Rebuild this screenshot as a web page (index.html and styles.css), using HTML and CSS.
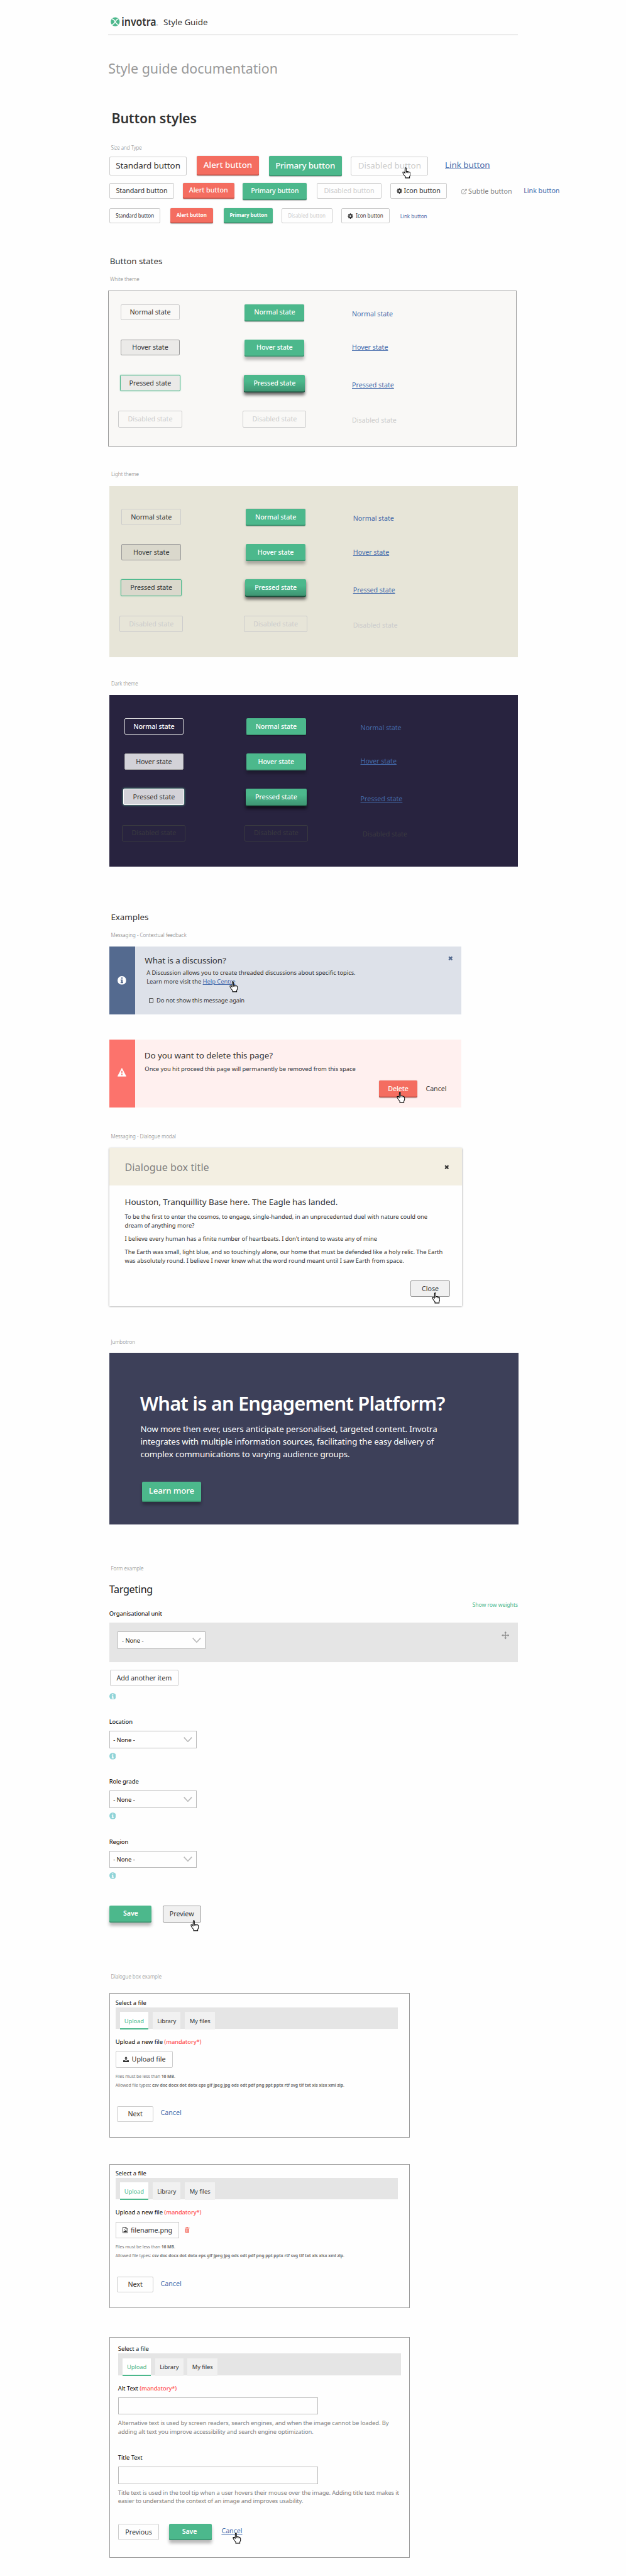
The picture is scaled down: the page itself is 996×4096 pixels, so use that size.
FILE: index.html
```html
<!DOCTYPE html>
<html lang="en">
<head>
<meta charset="utf-8">
<title>Invotra Style Guide</title>
<link rel="stylesheet" href="styles.css">
</head>
<body>
<svg class="sprite" aria-hidden="true">
  <symbol id="hand" viewBox="0 0 20 26"><path d="M6.5 1.5c1.2-.9 2.4-.2 2.6 1V9l2.5.3 2.6.8 2.6.9 1.6 2v5.2l-1.6 3.2v3H7.300v-2.700L4 17.800 1.500 13.300V10.900H4l2 2.300z" fill="#fff" stroke="#000" stroke-width="1.500"/><path d="M9.200 9v4M12 9.800v3.400M14.800 10.800v2.800" stroke="#000" stroke-width="1.100" fill="none"/></symbol>
  <symbol id="gear" viewBox="0 0 14 14"><path fill-rule="evenodd" fill="currentColor" d="M5.900.5h2.200l.4 1.700 1 .4 1.500-.9 1.500 1.500-.9 1.500.4 1 1.700.4v2.200l-1.700.4-.4 1 .9 1.500-1.500 1.500-1.500-.9-1 .4-.4 1.700H5.900l-.4-1.700-1-.4-1.500.9-1.500-1.500.9-1.500-.4-1L.3 8.300V6.100L2 5.700l.4-1-.9-1.500L3 1.700l1.500.9 1-.4zM7 4.900a2.200 2.200 0 1 0 0 4.400 2.200 2.200 0 0 0 0-4.400z"/></symbol>
  <symbol id="external" viewBox="0 0 14 14"><path d="M7 2.500H2.500a1.500 1.500 0 0 0-1.500 1.500v7A1.500 1.500 0 0 0 2.500 12.500h7A1.500 1.500 0 0 0 11 11V8.500" fill="none" stroke="currentColor" stroke-width="1.100"/><path d="M5.300 8.700 12 2" stroke="currentColor" stroke-width="1.500"/><path d="M8.800 1H13.400V5.600z" fill="currentColor"/></symbol>
  <symbol id="cross" viewBox="0 0 11 11"><path d="M1.800 1.800 9.200 9.200M9.200 1.800 1.800 9.200" stroke="currentColor" stroke-width="3.200"/></symbol>
  <symbol id="info" viewBox="0 0 20 20"><circle cx="10" cy="10" r="10" fill="currentColor"/><path class="cut" d="M8.400 3.400h3.300v2.800H8.400zM7 7.800h4.700v6h1.300v2.300H7v-2.300h1.400V10H7z"/></symbol>
  <symbol id="chev" viewBox="0 0 20 12"><path d="M1 1l9 9.500L19 1" fill="none" stroke="#bbb" stroke-width="2.400"/></symbol>
</svg>
<main class="page">
  <header class="top">
    <svg class="logo" viewBox="0 0 116 24">
      <circle cx="10.500" cy="12.500" r="10.300" fill="#4cb88c"/>
      <path d="M3 5.500c4 1.500 6 3.500 7.500 7s3.500 5.500 7.500 7M18 5.500c-4 1.500-6 3.500-7.500 7s-3.500 5.500-7.500 7" fill="none" stroke="#fefefe" stroke-width="2.100"/>
      <text x="25" y="22" class="wordmark" textLength="80" lengthAdjust="spacingAndGlyphs">invotra</text>
      <text x="105" y="21.500" class="reg">®</text>
    </svg>
    <span class="t20">Style Guide</span>
  </header>
  <h1 class="doc-title">Style guide documentation</h1>
  <h2 class="big-title">Button styles</h2>
  <p class="cap cap-size">Size and Type</p>

  <div class="row row-lg">
    <a class="btn std b1">Standard button</a>
    <a class="btn alert b2">Alert button</a>
    <a class="btn go b3">Primary button</a>
    <a class="btn std off b4">Disabled button<svg class="hand h-dis"><use href="#hand"/></svg></a>
    <a class="link under b5">Link button</a>
  </div>
  <div class="row row-md">
    <a class="btn std b1">Standard button</a>
    <a class="btn alert b2">Alert button</a>
    <a class="btn go b3">Primary button</a>
    <a class="btn std off b4">Disabled button</a>
    <a class="btn std b5"><svg class="ico"><use href="#gear"/></svg>Icon button</a>
    <a class="subtle"><svg class="ico"><use href="#external"/></svg>Subtle button</a>
    <a class="link b6">Link button</a>
  </div>
  <div class="row row-sm">
    <a class="btn std b1">Standard button</a>
    <a class="btn alert b2">Alert button</a>
    <a class="btn go b3">Primary button</a>
    <a class="btn std off b4">Disabled button</a>
    <a class="btn std b5"><svg class="ico"><use href="#gear"/></svg>Icon button</a>
    <a class="link b6">Link button</a>
  </div>

  <h3 class="sub states-title">Button states</h3>
  <p class="cap cap-white">White theme</p>
  <section class="panel white">
    <a class="btn std st">Normal state</a><a class="btn go st">Normal state</a><a class="link l1">Normal state</a>
    <a class="btn std st hov">Hover state</a><a class="btn go st hov">Hover state</a><a class="link l2 under">Hover state</a>
    <a class="btn std st press">Pressed state</a><a class="btn go st press">Pressed state</a><a class="link l3 under">Pressed state</a>
    <a class="btn std off dis">Disabled state</a><a class="btn std off dis">Disabled state</a><a class="link l1 faint">Disabled state</a>
  </section>
  <p class="cap cap-light">Light theme</p>
  <section class="panel light">
    <a class="btn std st">Normal state</a><a class="btn go st">Normal state</a><a class="link l1">Normal state</a>
    <a class="btn std st hov">Hover state</a><a class="btn go st hov">Hover state</a><a class="link l2 under">Hover state</a>
    <a class="btn std st press">Pressed state</a><a class="btn go st press">Pressed state</a><a class="link l3 under">Pressed state</a>
    <a class="btn std off dis">Disabled state</a><a class="btn std off dis">Disabled state</a><a class="link l1 faint">Disabled state</a>
  </section>
  <p class="cap cap-dark">Dark theme</p>
  <section class="panel dark">
    <a class="btn std st">Normal state</a><a class="btn go st">Normal state</a><a class="link l1">Normal state</a>
    <a class="btn std st hov">Hover state</a><a class="btn go st hov">Hover state</a><a class="link l2 under">Hover state</a>
    <a class="btn std st press">Pressed state</a><a class="btn go st press">Pressed state</a><a class="link l3 under">Pressed state</a>
    <a class="btn std off dis">Disabled state</a><a class="btn std off dis">Disabled state</a><a class="link l1 faint">Disabled state</a>
  </section>

  <h3 class="sub ex-title">Examples</h3>
  <p class="cap cap-msg">Messaging - Contextual feedback</p>
  <section class="msg msg-info">
    <div class="stripe"><svg class="i20"><use href="#info"/></svg></div>
    <div class="msg-body">
      <h4 class="t20">What is a discussion?</h4>
      <p class="t14 disc">A Discussion allows you to create threaded discussions about specific topics.<br>Learn more visit the <a class="inline-link">Help Centre<svg class="hand h-help"><use href="#hand"/></svg></a></p>
      <label class="t14 check"><span class="box"></span>Do not show this message again</label>
    </div>
    <svg class="x11"><use href="#cross"/></svg>
  </section>
  <section class="msg msg-alert">
    <div class="stripe"><svg class="i20" viewBox="0 0 20 20"><path d="M10 .8 19.600 19.300H.4z" fill="#fff" stroke="#fff" stroke-linejoin="round"/><path d="M8.700 6.800h2.700l-.4 6.200H9.100zM8.800 14.400h2.500v2.400H8.800z" fill="#fc736c"/></svg></div>
    <div class="msg-body">
      <h4 class="t20">Do you want to delete this page?</h4>
      <p class="t14">Once you hit proceed this page will permanently be removed from this space</p>
      <div class="msg-actions"><a class="btn alert">Delete<svg class="hand h-del"><use href="#hand"/></svg></a><a class="plain">Cancel</a></div>
    </div>
  </section>

  <p class="cap cap-modal">Messaging - Dialogue modal</p>
  <section class="modal">
    <header><h4>Dialogue box title</h4><svg class="x11"><use href="#cross"/></svg></header>
    <div class="modal-body">
      <h5 class="t20">Houston, Tranquillity Base here. The Eagle has landed.</h5>
      <p class="t14">To be the first to enter the cosmos, to engage, single-handed, in an unprecedented duel with nature could one<br>dream of anything more?</p>
      <p class="t14">I believe every human has a finite number of heartbeats. I don't intend to waste any of mine</p>
      <p class="t14">The Earth was small, light blue, and so touchingly alone, our home that must be defended like a holy relic. The Earth<br>was absolutely round. I believe I never knew what the word round meant until I saw Earth from space.</p>
      <a class="btn std hov">Close<svg class="hand h-close"><use href="#hand"/></svg></a>
    </div>
  </section>

  <p class="cap cap-jumbo">Jumbotron</p>
  <section class="jumbo">
    <h2>What is an Engagement Platform?</h2>
    <p>Now more then ever, users anticipate personalised, targeted content. Invotra<br>integrates with multiple information sources, facilitating the easy delivery of<br>complex communications to varying audience groups.</p>
    <a class="btn go hov">Learn more</a>
  </section>

  <p class="cap cap-form">Form example</p>
  <section class="form">
    <h3 class="form-title">Targeting</h3>
    <a class="weights">Show row weights</a>
    <p class="t14 lab org">Organisational unit</p>
    <div class="unit">
      <div class="select">- None -<svg><use href="#chev"/></svg></div>
      <svg class="move" viewBox="0 0 18 18"><path d="M9 2v14M2 9h14" stroke="#8e8e8e" stroke-width="1.700"/><path d="M9 0l3 4H6zM9 18l3-4H6zM0 9l4-3v6zM18 9l-4-3v6z" fill="#8e8e8e"/></svg>
    </div>
    <a class="btn std add">Add another item</a>
    <svg class="tip tip-first"><use href="#info"/></svg>
    <p class="t14 lab">Location</p>
    <div class="select">- None -<svg><use href="#chev"/></svg></div>
    <svg class="tip"><use href="#info"/></svg>
    <p class="t14 lab">Role grade</p>
    <div class="select">- None -<svg><use href="#chev"/></svg></div>
    <svg class="tip"><use href="#info"/></svg>
    <p class="t14 lab">Region</p>
    <div class="select">- None -<svg><use href="#chev"/></svg></div>
    <svg class="tip"><use href="#info"/></svg>
    <div class="form-actions"><a class="btn go hov">Save</a><a class="btn std hov">Preview<svg class="hand h-prev"><use href="#hand"/></svg></a></div>
  </section>

  <p class="cap cap-dialog">Dialogue box example</p>
  <section class="dialog">
    <p class="t14 sel">Select a file</p>
    <nav class="tabs"><a class="on">Upload</a><a>Library</a><a>My files</a></nav>
    <p class="t14 lab">Upload a new file <b>(mandatory*)</b></p>
    <a class="btn std file"><svg class="ico" viewBox="0 0 14 14"><path d="M7 0l4 4.600H8.600V9H5.400V4.600H3zM0 9.500h4.200l1 1.200h3.600l1-1.200H14V14H0z" fill="#333"/></svg>Upload file</a>
    <p class="tiny">Files must be less than <b>16 MB</b>.<br>Allowed file types: <b>csv doc docx dot dotx eps gif jpeg jpg ods odt pdf png ppt pptx rtf svg tif txt xls xlsx xml zip</b>.</p>
    <div class="nav-actions"><a class="btn std">Next</a><a class="link">Cancel</a></div>
  </section>
  <section class="dialog second">
    <p class="t14 sel">Select a file</p>
    <nav class="tabs"><a class="on">Upload</a><a>Library</a><a>My files</a></nav>
    <p class="t14 lab">Upload a new file <b>(mandatory*)</b></p>
    <div class="file-row">
      <a class="btn std file named"><svg class="ico doc" viewBox="0 0 12 14"><path d="M.7.7h7L11.300 4.200v9.100H.7zM7.500.7v3.700h3.800" fill="none" stroke="#333" stroke-width="1.300"/><path d="M2.300 12V9.800l1.500-1.300 1.200 1 2.500-2.700 2.300 2.400V12z" fill="#333"/><circle cx="3.800" cy="6" r="1.100" fill="#333"/></svg>filename.png</a>
      <svg class="trash" viewBox="0 0 11 13"><path d="M0 1.800h3L3.800.3h3.400L8 1.800h3v1.500H0zM1 3.800h9V13H1z" fill="#f46d60"/><path d="M3.500 5v6.500M5.500 5v6.500M7.500 5v6.500" stroke="#fefefe" stroke-width=".8"/></svg>
    </div>
    <p class="tiny">Files must be less than <b>16 MB</b>.<br>Allowed file types: <b>csv doc docx dot dotx eps gif jpeg jpg ods odt pdf png ppt pptx rtf svg tif txt xls xlsx xml zip</b>.</p>
    <div class="nav-actions"><a class="btn std">Next</a><a class="link">Cancel</a></div>
  </section>
  <section class="dialog third">
    <p class="t14 sel">Select a file</p>
    <nav class="tabs"><a class="on">Upload</a><a>Library</a><a>My files</a></nav>
    <p class="t14 lab">Alt Text <b>(mandatory*)</b></p>
    <div class="input"></div>
    <p class="t14 help">Alternative text is used by screen readers, search engines, and when the image cannot be loaded. By<br>adding alt text you improve accessibility and search engine optimization.</p>
    <p class="t14 lab lab-title">Title Text</p>
    <div class="input"></div>
    <p class="t14 help">Title text is used in the tool tip when a user hovers their mouse over the image. Adding title text makes it<br>easier to understand the context of an image and improves usability.</p>
    <div class="end-actions"><a class="btn std">Previous</a><a class="btn go hov">Save</a><a class="link under">Cancel<svg class="hand h-end"><use href="#hand"/></svg></a></div>
  </section>
</main>
</body>
</html>
```
FILE: styles.css
```css
/* 1rem = 100 design pixels */
html { font-size: 69.1892px; }
* { box-sizing: border-box; margin: 0; padding: 0; }
body {
  height: 59.2rem;
  background: #fefefe;
  color: #333;
  font-family: "Noto Sans", "Open Sans", sans-serif;
  font-size: .155rem;
  letter-spacing: -.004em;
  white-space: nowrap;
}
h1, h2, h3, h4, h5 { font-weight: 400; }
svg { display: block; flex: none; }
.sprite { position: absolute; width: 0; height: 0; }
.page { margin-left: 2.49rem; width: 9.42rem; display: flow-root; }

/* Type */
.t20, .sub { font-size: .194rem; line-height: .28rem; }
.t14 { font-size: .136rem; line-height: .2rem; }
.cap { margin-left: .06rem; font-size: .117rem; line-height: .16rem; font-weight: 300; color: #808080; letter-spacing: -.005em; }
.link { font-size: .155rem; line-height: .24rem; color: #446aab; }
.under { text-decoration: underline; text-decoration-thickness: 1px; text-underline-offset: 1px; }
.plain { font-size: .155rem; line-height: .24rem; }

/* Header */
.top { display: flex; align-items: flex-start; height: .81rem; padding: .37rem 0 0 .05rem; border-bottom: 1.4px solid #ccc; }
.logo { width: 1.16rem; height: .24rem; margin: .01rem .06rem 0 0; overflow: visible; }
.wordmark { font-size: 26px; font-weight: 600; fill: #333; letter-spacing: 0; }
.reg { font-size: 5px; fill: #777; }
.doc-title { margin-top: .546rem; font-size: .31rem; line-height: .44rem; color: #999; }
.big-title { margin: .704rem 0 0 .075rem; font-size: .31rem; line-height: .44rem; font-weight: 600; letter-spacing: -.009em; }
.cap-size { margin-top: .365rem; }

/* Buttons */
.btn {
  position: relative;
  display: flex;
  align-items: center;
  justify-content: center;
  height: .37rem;
  border-radius: .03rem;
  font-size: .155rem;
  line-height: .24rem;
}
.std { border: 1px solid #ccc; }
.std.off { color: #ccc; }
.go, .alert { color: #fff; font-weight: 500; letter-spacing: -.014em; padding-bottom: .02rem; height: .39rem; }
.go { background: #4cb88c; box-shadow: inset 0 -.02rem #3a8f6c, 0 .01rem .02rem rgba(0,0,0,.3); }
.alert { background: #f46d60; box-shadow: inset 0 -.02rem #c2554a, 0 .01rem .02rem rgba(0,0,0,.3); }
.std.hov { background: rgba(0,0,0,.055); border-color: #999; }
.go.hov { box-shadow: inset 0 -.02rem #3a8f6c, 0 .07rem .08rem rgba(0,0,0,.28); }
.std.press { background: rgba(0,0,0,.055); border-color: #4cb88c; box-shadow: 0 0 .03rem rgba(76,184,140,.7); }
.go.press { background: linear-gradient(#4cb88c 35%, #3d9270); box-shadow: inset 0 -.02rem #1d4d3a, 0 .05rem .07rem rgba(0,0,0,.6); }
.ico { width: .13rem; height: .13rem; }

/* Size rows */
.row { display: flex; align-items: flex-start; padding-left: .02rem; }
.row > * { flex: none; }
.row-lg { margin-top: .125rem; height: .46rem; }
.row-lg .btn, .row-lg .link { font-size: .194rem; line-height: .28rem; }
.row-lg .std { height: .435rem; margin-top: .01rem; }
.row-lg .b1 { width: 1.79rem; }
.row-lg .b2 { width: 1.42rem; height: .445rem; margin-left: .23rem; letter-spacing: -.004em; }
.row-lg .b3 { width: 1.68rem; height: .46rem; margin-left: .23rem; }
.row-lg .b4 { width: 1.78rem; margin-left: .21rem; }
.row-lg .b5 { margin: .065rem 0 0 .385rem; }
.row-md { margin-top: .15rem; height: .4rem; }
.row-md .b1 { width: 1.5rem; }
.row-md .b2 { width: 1.19rem; height: .37rem; margin-left: .19rem; letter-spacing: -.003em; }
.row-md .b3 { width: 1.48rem; height: .4rem; margin-left: .19rem; }
.row-md .b4 { width: 1.5rem; margin-left: .22rem; }
.row-md .b5 { width: 1.29rem; margin-left: .2rem; gap: .04rem; }
.subtle { display: flex; align-items: center; gap: .03rem; margin: .08rem 0 0 .34rem; width: 1.18rem; line-height: .24rem; color: #808080; letter-spacing: .008em; }
.row-md .b6 { margin: .07rem 0 0 .255rem; }
.row-sm { margin-top: .19rem; height: .34rem; }
.row-sm .btn, .row-sm .link { font-size: .116rem; line-height: .2rem; }
.row-sm .std { height: .34rem; }
.row-sm .alert, .row-sm .go { height: .34rem; font-weight: 700; letter-spacing: -.012em; }
.row-sm .b1 { width: 1.18rem; }
.row-sm .b2 { width: .99rem; margin-left: .22rem; }
.row-sm .b3 { width: 1.13rem; margin-left: .25rem; }
.row-sm .b4 { width: 1.17rem; margin-left: .19rem; }
.row-sm .b5 { width: 1.11rem; margin-left: .21rem; gap: .06rem; }
.row-sm .b6 { margin: .083rem 0 0 .245rem; }

/* Theme panels */
.states-title { margin: .738rem 0 0 .035rem; }
.cap-white { margin: .177rem 0 0 .04rem; }
.cap-light { margin: .545rem 0 0 .07rem; }
.cap-dark { margin: .515rem 0 0 .07rem; }
.panel {
  display: grid;
  grid-template-columns: 2.86rem 2.51rem 3rem;
  grid-template-rows: .81rem .81rem .83rem .38rem;
  align-items: start;
  justify-items: start;
  margin-top: .195rem;
  width: 9.39rem;
}
.white { height: 3.59rem; padding: .3rem 0 0 .22rem; border: 1px solid #999; background: #f9f8f6; }
.light, .dark { height: 3.94rem; margin-left: .03rem; padding: .53rem 0 0 .23rem; background: #e7e5d8; }
.dark { grid-template-columns: 2.81rem 2.67rem 3rem; padding-left: .29rem; background: #28233f; }
.st { width: 1.37rem; margin-left: .045rem; }
.st.press { width: 1.4rem; margin-left: .03rem; }
.std.press, .dis { height: .38rem; }
.go.press { height: .4rem; }
.dis { width: 1.46rem; }
.l1 { margin-top: .1rem; }
.l2 { margin-top: .06rem; }
.l3 { margin-top: .12rem; }
.faint { color: #ccc; }
.dark .std.st { color: #fff; border-color: #ddd; font-weight: 500; letter-spacing: -.014em; }
.dark .std.st.hov, .dark .std.st.press { color: #333; background: #d3d2d8; font-weight: 400; letter-spacing: -.004em; }
.dark .std.st.hov { border-color: #aaa; }
.dark .std.st.press { border-color: #fff; box-shadow: 0 0 .05rem #6fd0a8; }
.dark .off { color: #3a3a3f; border-color: #3a3a3f; }
.dark .faint { margin-left: .05rem; color: #3a3a3f; }

/* Messages */
.ex-title { margin: 1.025rem 0 0 .06rem; }
.cap-msg { margin-top: .18rem; }
.msg { display: flex; width: 8.1rem; margin-left: .02rem; }
.msg-info { margin-top: .185rem; height: 1.56rem; background: #dde1e9; }
.msg-alert { margin-top: .59rem; height: 1.55rem; background: #fff0ef; }
.stripe { display: flex; align-items: center; justify-content: center; width: .6rem; background: #546a8f; color: #fff; }
.msg-alert .stripe { background: #fc736c; padding-bottom: .05rem; }
.i20 { width: .2rem; height: .2rem; }
.stripe .i20 { fill: #546a8f; }
.cut { fill: inherit; }
.msg-body { flex: 1; padding: .195rem 0 0 .22rem; }
.msg-info .t20 { letter-spacing: -.011em; }
.disc { margin: .032rem 0 0 .04rem; }
.inline-link { position: relative; color: #446aab; text-decoration: underline; text-decoration-thickness: 1px; text-underline-offset: 1px; }
.check { display: flex; align-items: center; gap: .07rem; margin: .24rem 0 0 .09rem; letter-spacing: -.01em; }
.box { width: .11rem; height: .11rem; border: 1px solid #444; border-radius: 1px; }
.msg .x11 { margin: .225rem .2rem 0 0; color: #546a8f; }
.x11 { width: .11rem; height: .11rem; }
.msg-alert .msg-body { padding: .225rem .34rem 0 .21rem; }
.msg-alert .t14 { margin: .062rem 0 0 .01rem; }
.msg-actions { display: flex; align-items: center; justify-content: flex-end; margin-top: .163rem; gap: .2rem; }
.msg-actions .btn { width: .87rem; height: .4rem; }

/* Modal */
.cap-modal { margin-top: .585rem; }
.modal { margin: .185rem 0 0 .02rem; width: 8.11rem; height: 3.645rem; box-shadow: 0 .02rem .04rem rgba(0,0,0,.45); background: #fefefe; }
.modal header { display: flex; justify-content: space-between; height: .87rem; padding: .296rem .29rem 0 .36rem; background: #f3efe2; }
.modal h4 { font-size: .233rem; line-height: .32rem; color: #808080; letter-spacing: .004em; }
.modal .x11 { margin-top: .1rem; }
.modal-body { padding: .245rem 0 0 .36rem; }
.modal-body .t14 { margin-top: .1rem; }
.modal-body .btn { width: .91rem; height: .38rem; margin: .353rem 0 0 6.57rem; }

/* Jumbotron */
.cap-jumbo { margin-top: .73rem; }
.jumbo { margin: .185rem 0 0 .03rem; width: 9.4rem; height: 3.945rem; padding: .877rem 0 0 .7rem; background: #3d4059; color: #fff; }
.jumbo h2 { font-size: .446rem; line-height: .56rem; font-weight: 600; letter-spacing: -.027em; }
.jumbo p { margin: .163rem 0 0 .01rem; font-size: .194rem; line-height: .29rem; letter-spacing: -.011em; }
.jumbo .btn { margin: .49rem 0 0 .04rem; width: 1.37rem; height: .46rem; padding-bottom: .05rem; font-size: .194rem; }

/* Form */
.cap-form { margin-top: .92rem; }
.form { margin-left: .02rem; }
.form-title { margin-top: .245rem; font-size: .233rem; line-height: .32rem; color: #222; letter-spacing: -.019em; }
.weights { display: block; margin-top: .13rem; font-size: .126rem; line-height: .16rem; text-align: right; color: #4cb88c; letter-spacing: -.011em; }
.lab { margin-top: .417rem; color: #000; }
.lab.org { margin-top: .017rem; }
.unit { display: flex; align-items: flex-start; justify-content: space-between; margin-top: .103rem; height: .9rem; padding: .1rem .2rem 0; background: #e5e5e5; }
.select { display: flex; align-items: center; justify-content: space-between; width: 2.02rem; height: .4rem; margin-top: .103rem; padding: 0 .09rem 0 .08rem; border: 1px solid #bbb; background: #fefefe; color: #111; font-size: .136rem; }
.select svg { width: .2rem; height: .12rem; }
.unit .select { margin-top: .1rem; }
.move { width: .18rem; height: .18rem; margin-top: .1rem; }
.add { margin: .18rem 0 0 .02rem; width: 1.57rem; height: .38rem; }
.tip { margin-top: .1rem; width: .155rem; height: .155rem; color: #8fd3d7; fill: #fefefe; }
.tip-first { margin-top: .15rem; }
.form-actions { display: flex; gap: .25rem; margin: .615rem 0 0 .01rem; }
.form-actions .btn { height: .38rem; width: .88rem; }
.form-actions .go { width: .97rem; font-weight: 600; }

/* Dialogs */
.cap-dialog { margin-top: 1.165rem; }
.dialog { margin: .305rem 0 0 .03rem; width: 6.91rem; height: 3.32rem; padding: .107rem 0 0 .12rem; border: 1px solid #999; }
.second { margin-top: .6rem; }
.sel { color: #111; }
.tabs { display: flex; gap: .1rem; width: 6.5rem; height: .5rem; padding: .11rem .1rem 0; background: #e5e5e5; }
.tabs a { display: flex; align-items: center; justify-content: center; width: .64rem; height: .4rem; background: #f1f1f1; font-size: .136rem; letter-spacing: -.01em; }
.tabs a.on { width: .66rem; background: #fff; color: #4cb88c; box-shadow: inset 0 -.03rem #4cb88c; }
.tabs a:last-child { width: .69rem; }
.dialog .lab { margin-top: .197rem; }
.lab b { color: #ff5050; font-weight: 500; letter-spacing: -.014em; }
.file { width: 1.31rem; height: .38rem; margin: .113rem 0 0 .01rem; gap: .07rem; }
.named { width: 1.45rem; border-radius: 0; }
.doc { width: .12rem; height: .14rem; }
.file-row { display: flex; align-items: center; }
.trash { width: .11rem; height: .13rem; margin: .1rem 0 0 .14rem; }
.tiny { margin-top: .102rem; font-size: .099rem; line-height: .2rem; color: #757575; letter-spacing: -.008em; }
.nav-actions { display: flex; align-items: flex-start; margin: .378rem 0 0 .04rem; }
.nav-actions .btn { width: .83rem; }
.nav-actions .link { margin: .04rem 0 0 .17rem; }
.third { margin-top: .66rem; height: 5.08rem; padding: .167rem 0 0 .18rem; }
.input { margin-top: .103rem; width: 4.6rem; height: .4rem; border: 1px solid #bbb; }
.help { margin-top: .097rem; color: #808080; letter-spacing: -.013em; }
.dialog .lab-title { margin-top: .4rem; }
.end-actions { display: flex; align-items: flex-start; margin: .413rem 0 0 .01rem; }
.end-actions .btn { width: .93rem; height: .38rem; }
.end-actions .go { width: .97rem; margin-left: .24rem; font-weight: 600; padding-right: .04rem; }
.end-actions .link { position: relative; margin: .05rem 0 0 .23rem; }

/* Pointer over hovered items */
.hand { position: absolute; width: .2rem; height: .26rem; }
.h-dis { left: 1.16rem; top: .235rem; }
.h-help { left: .61rem; top: .09rem; }
.h-del { left: .4rem; top: .27rem; }
.h-close { left: .47rem; top: .26rem; }
.h-prev { left: .63rem; top: .31rem; }
.h-end { left: .25rem; top: .16rem; }
```
